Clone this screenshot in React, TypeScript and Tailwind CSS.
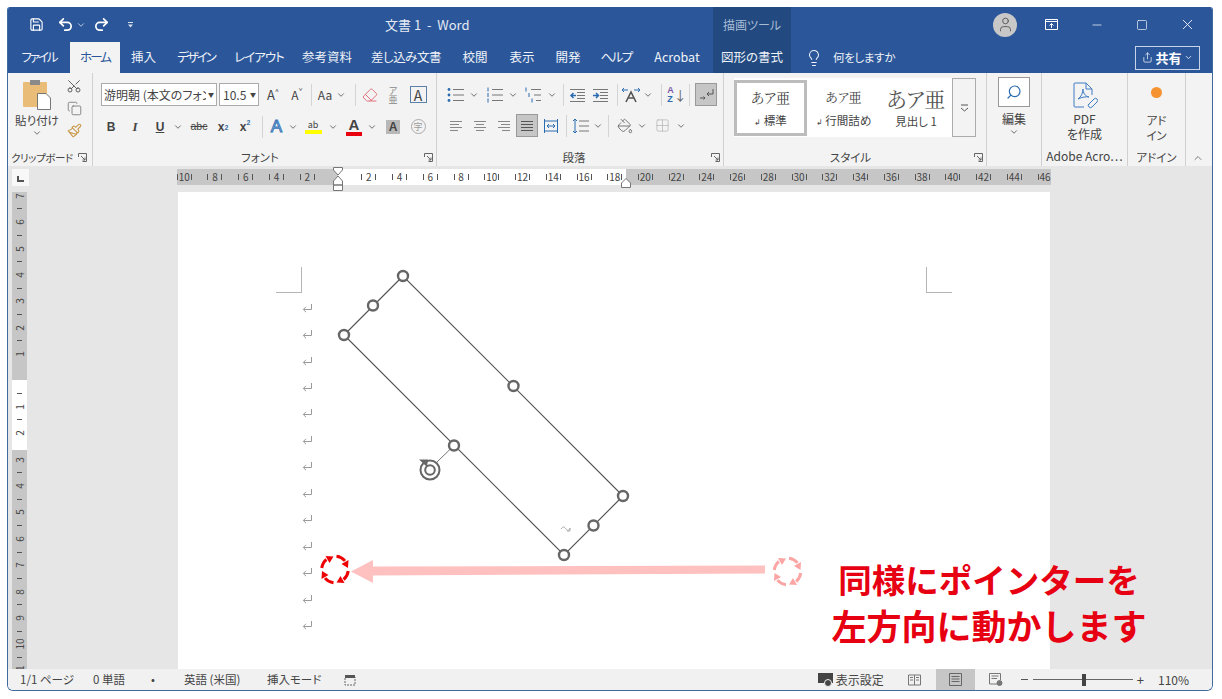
import { ReactNode } from 'react';
import {
  Save, Undo2, Redo2, ChevronDown, ChevronUp, Scissors, Copy, Paintbrush, Lightbulb, Search, Minus, Square, X, Eraser, PaintBucket, Grid2x2, User, Share,
} from 'lucide-react';

const Chev = ({ className = 'text-[#555]' }: { className?: string }) => <ChevronDown size={10} strokeWidth={2} className={`shrink-0 ${className}`} />;

// 幅を固定したセル
const Slot = ({ w, children, className = '' }: { w: string; children?: ReactNode; className?: string }) => (
  <div className={`flex h-full shrink-0 items-center justify-center ${w} ${className}`}>{children}</div>
);

const Sep = () => <div className="h-[22px] w-px shrink-0 bg-[#d4d4d4]" />;

const Launcher = () => (
  <svg className="shrink-0" width="9" height="9" viewBox="0 0 9 9" fill="none" stroke="#666" strokeWidth="1">
    <path d="M.5 4V.5H8.5V8.5H4.5M3 3l4 4M7 4.5V7H4.5" />
  </svg>
);

// 段落アイコン用の横線
const Lines = ({ rows, color = '#777' }: { rows: [number, number][]; color?: string }) => (
  <svg width="16" height="16" viewBox="0 0 16 16" stroke={color} strokeWidth="1" fill="none">
    {rows.map(([a, b], i) => (
      <path key={i} d={`M${a} ${3.5 + i * 3}H${b}`} />
    ))}
  </svg>
);

const Bullets = ({ kind }: { kind: 'dot' | 'num' | 'multi' }) => (
  <svg width="18" height="16" viewBox="0 0 18 16" fill="none">
    <path d={kind === 'multi' ? 'M7 2.5H17M10 8H17M12 13.5H17' : 'M6 2.5H17M6 8H17M6 13.5H17'} stroke="#777" />
    {kind === 'dot' && [2.5, 8, 13.5].map((y) => <circle key={y} cx="2" cy={y} r="1.4" fill="#2b6cb0" />)}
    {kind === 'num' && [2.5, 8, 13.5].map((y) => <path key={y} d={`M2 ${y - 2}V${y + 2}`} stroke="#2b6cb0" />)}
    {kind === 'multi' && <path d="M2 .5V4.5M5 6V10M8 11.5V15.5" stroke="#2b6cb0" />}
  </svg>
);

const Indent = ({ flip }: { flip?: boolean }) => (
  <svg className="shrink-0" width="17" height="16" viewBox="0 0 17 16" fill="none" stroke="#777">
    <path d="M1 2.5H16M8 5.5H16M8 8.5H16M8 11.5H16M1 14.5H16" />
    <path d={flip ? 'M1 8.5H6M4 6l2.5 2.5L4 11' : 'M2 8.5H7M4.5 6L2 8.5 4.5 11'} stroke="#2b6cb0" strokeWidth="1.5" />
  </svg>
);

const ReturnMark = () => (
  <svg width="11" height="11" viewBox="0 0 11 11" fill="none" stroke="#9a9a9a" strokeWidth="1">
    <path d="M9.5 1V6.5H1.5M4 3.8L1.3 6.5 4 9.2" />
  </svg>
);

// 回転カーソル
const RotateCursor = ({ x, y, color }: { x: number; y: number; color: string }) => (
  <g transform={`translate(${x} ${y})`} fill={color} stroke="none">
    {[0, 90, 180, 270].map((deg) => (
      <g key={deg} transform={`rotate(${deg})`}>
        <path d="M1.5 -13.2A13.3 13.3 0 0 1 10 -8.6" fill="none" stroke={color} strokeWidth="3" />
        <path d="M13.5 -9.5L13 -1.5 6.5 -5.5Z" />
      </g>
    ))}
  </g>
);

const Handle = ({ x, y }: { x: number; y: number }) => <circle cx={x} cy={y} r="5" fill="#fff" stroke="#666" strokeWidth="2.4" />;

const tabs = [
  ['ファイル', 'w-[62px] tracking-[-2px]'],
  ['ホーム', 'w-[50px] bg-[#f3f3f3] text-[#2b579a] tracking-[-2px]'],
  ['挿入', 'w-[47px]'],
  ['デザイン', 'w-[58px] tracking-[-2px]'],
  ['レイアウト', 'w-[68px] tracking-[-1px]'],
  ['参考資料', 'w-[68px]'],
  ['差し込み文書', 'w-[90px] tracking-[-0.5px]'],
  ['校閲', 'w-[48px]'],
  ['表示', 'w-[46px]'],
  ['開発', 'w-[46px]'],
  ['ヘルプ', 'w-[50px] tracking-[-1.5px]'],
  ['Acrobat', 'w-[72px]'],
  ['図形の書式', 'w-[78px] bg-[#224a80]'],
];

const RulerCell = ({ n }: { n: number }) => (
  <div className="flex w-[30.75px] shrink-0 items-center justify-center">
    <span className="h-[6px] w-px bg-[#555]" />
    <span className="w-[13px] text-center text-[10px] leading-none">{n}</span>
    <span className="h-[6px] w-px bg-[#555]" />
  </div>
);

const VRulerCell = ({ n }: { n: number }) => (
  <div className="flex h-[26.4px] w-full shrink-0 flex-col items-center justify-between">
    <span className="h-px w-[5px] bg-[#555]" />
    <span className="-rotate-90 text-[10px] leading-none">{n}</span>
    <span className="h-0 w-[5px]" />
  </div>
);

export default function App() {
  const marks = Array.from({ length: 13 }, (_, i) => i);

  return (
    <div className="h-[699px] w-[1222px] overflow-hidden bg-white pl-[7px] pt-[7px] font-['Noto_Sans_CJK_JP','Noto_Sans',sans-serif] text-[12px] text-[#444] [font-feature-settings:'palt']">
      <div className="flex h-[684px] w-[1206px] flex-col overflow-hidden rounded-b-[6px] rounded-t-[3px] border-b border-l border-r border-[#3f6a9e]">
        {/* タイトルバー */}
        <div className="flex h-[35px] shrink-0 items-center bg-[#2b579a] text-white">
          <div className="flex h-full w-[377px] items-center pl-[19px]">
            <Slot w="w-[18px]"><Save size={15} strokeWidth={1.8} /></Slot>
            <Slot w="w-[24px]" className="ml-[8px]"><Undo2 size={17} strokeWidth={2.4} /></Slot>
            <Slot w="w-[8px]"><Chev className="text-[#d5deeb]" /></Slot>
            <Slot w="w-[24px]" className="ml-[4px]"><Redo2 size={17} strokeWidth={2.4} /></Slot>
            <Slot w="w-[10px]" className="ml-[12px]">
              <svg width="7" height="7" viewBox="0 0 7 7" fill="#d5deeb"><path d="M1 1H6V2H1ZM1 3.5H6L3.5 6.5Z" /></svg>
            </Slot>
          </div>
          <div className="w-[328px] text-[13px] text-[#e4eaf4]">文書 1&nbsp;&nbsp;-&nbsp;&nbsp;Word</div>
          <div className="flex h-full w-[78px] items-center justify-center bg-[#224a80] text-[12px] text-[#a9bcd6]">描画ツール</div>
          <div className="flex-1" />
          <div className="mr-[13px] flex h-[24px] w-[24px] items-center justify-center rounded-full bg-[#c8c8c8]">
            <User size={17} strokeWidth={1.3} className="text-[#555]" />
          </div>
          <Slot w="w-[42px]">
            <svg width="13" height="11" viewBox="0 0 13 11" fill="none" stroke="#fff"><path d="M.5.5H12.5V10.5H.5ZM.5 2.5H12.5M6.5 9V4.5M4.5 6.5l2-2 2 2" /></svg>
          </Slot>
          <Slot w="w-[50px]"><Minus size={14} strokeWidth={1.2} /></Slot>
          <Slot w="w-[40px]"><Square size={12} strokeWidth={1.3} className="rounded-[2px]" /></Slot>
          <Slot w="w-[50px]"><X size={17} strokeWidth={1.2} /></Slot>
        </div>

        {/* タブ */}
        <div className="flex h-[31px] shrink-0 items-center bg-[#2b579a] text-[12.5px] text-[#eef2f8]">
          {tabs.map(([label, cls]) => (
            <div key={label} className={`flex h-full shrink-0 items-center justify-center ${cls}`}>{label}</div>
          ))}
          <Slot w="w-[46px]"><Lightbulb size={18} strokeWidth={1.4} /></Slot>
          <div className="-ml-[4px] text-[11.5px] tracking-[-0.3px]">何をしますか</div>
          <div className="flex-1" />
          <div className="mr-[12px] flex h-[24px] w-[65px] items-center justify-center gap-[2px] border border-[#c7d3e6] text-[13px] font-bold text-white">
            <Share size={11} strokeWidth={1.5} />
            共有
            <ChevronDown size={9} strokeWidth={2} />
          </div>
        </div>

        {/* リボン */}
        <div className="flex h-[93px] shrink-0 bg-[#f3f3f3]">
          {/* クリップボード */}
          <div className="flex w-[85px] shrink-0 flex-col border-r border-[#d0d0d0]">
            <div className="flex h-[76px]">
              <div className="flex w-[58px] flex-col items-center pt-[6px]">
                <svg width="30" height="31" viewBox="0 0 30 31">
                  <rect x="1" y="3" width="24" height="25" rx="1" fill="#e9bd77" />
                  <rect x="8" y="1" width="10" height="5" fill="#8a8a8a" />
                  <path d="M15.5 14.5H24L28.5 19V30.5H15.5Z" fill="#fff" stroke="#777" />
                </svg>
                <div className="mt-[2px] whitespace-nowrap text-[11.5px] leading-[16px] text-[#444]">貼り付け</div>
                <Chev />
              </div>
              <div className="flex flex-col items-center gap-[7px] pt-[5px]">
                <Scissors size={16} strokeWidth={1.4} className="-rotate-90 text-[#555]" />
                <Copy size={15} strokeWidth={1.2} className="text-[#666]" />
                <Paintbrush size={15} strokeWidth={1.8} className="text-[#c99a4b]" />
              </div>
            </div>
            <div className="flex h-[17px] items-center justify-between pl-[3px] pr-[5px] text-[10.5px]">
              <span className="whitespace-nowrap tracking-[-0.4px]">クリップボード</span>
              <Launcher />
            </div>
          </div>

          {/* フォント */}
          <div className="flex w-[344px] shrink-0 flex-col border-r border-[#d0d0d0] pt-[10px]">
            <div className="flex h-[23px] items-center pl-[8px]">
              <div className="flex h-[23px] w-[116px] items-center border border-[#ababab] bg-white pl-[2px] pr-[2px] text-[12px]">
                <span className="min-w-0 flex-1 overflow-hidden whitespace-nowrap">游明朝 (本文のフォン</span>
                <span className="ml-[2px] text-[6px]">▼</span>
              </div>
              <div className="ml-[2px] flex h-[23px] w-[40px] items-center border border-[#ababab] bg-white pl-[3px] pr-[2px] text-[12px]">
                <span className="min-w-0 flex-1 overflow-hidden">10.5</span>
                <span className="text-[6px]">▼</span>
              </div>
              <Slot w="w-[28px]" className="text-[13px]">A<sup className="text-[7px]">^</sup></Slot>
              <Slot w="w-[20px]" className="text-[12px]">A<sup className="text-[7px]">ˇ</sup></Slot>
              <Slot w="w-[8px]"><Sep /></Slot>
              <Slot w="w-[20px]" className="text-[12px]">Aa</Slot>
              <Slot w="w-[12px]"><Chev /></Slot>
              <Slot w="w-[16px]"><Sep /></Slot>
              <Slot w="w-[14px]"><Eraser size={16} strokeWidth={1.5} className="shrink-0 text-[#e0707a]" /></Slot>
              <Slot w="w-[32px]" className="text-[9px] leading-[9px] text-[#888]"><span className="text-center">ア<br />亜</span></Slot>
              <Slot w="w-[18px]">
                <div className="flex h-[17px] w-[17px] shrink-0 items-center justify-center border border-[#5a7fa8] text-[14px] leading-none">A</div>
              </Slot>
            </div>
            <div className="mt-[9px] flex h-[23px] items-center pl-[6px] text-[#444]">
              <Slot w="w-[24px]" className="font-['Liberation_Sans',sans-serif] text-[12px] font-bold">B</Slot>
              <Slot w="w-[24px]" className="font-['Liberation_Serif',serif] text-[13px] font-bold italic">I</Slot>
              <Slot w="w-[26px]" className="font-['Liberation_Sans',sans-serif] text-[12px] font-bold underline">U</Slot>
              <Slot w="w-[10px]"><Chev /></Slot>
              <Slot w="w-[32px]" className="font-['Liberation_Sans',sans-serif] text-[10.5px] line-through">abc</Slot>
              <Slot w="w-[16px]" className="font-['Liberation_Sans',sans-serif] text-[12px] font-bold">x<sub className="text-[7px] text-[#3a6ea5]">2</sub></Slot>
              <Slot w="w-[28px]" className="font-['Liberation_Sans',sans-serif] text-[12px] font-bold">x<sup className="text-[7px] text-[#3a6ea5]">2</sup></Slot>
              <Slot w="w-[6px]"><Sep /></Slot>
              <Slot w="w-[23px]" className="font-['Liberation_Sans',sans-serif] text-[17px] text-[#bcd3ee] [-webkit-text-stroke:1px_#3a78b8]">A</Slot>
              <Slot w="w-[10px]"><Chev /></Slot>
              <Slot w="w-[30px]">
                <div className="flex flex-col items-center leading-none">
                  <span className="text-[9px] leading-[11px]">ab</span>
                  <span className="h-[4px] w-[17px] bg-[#ffff00]" />
                </div>
              </Slot>
              <Slot w="w-[10px]"><Chev /></Slot>
              <Slot w="w-[32px]">
                <div className="flex flex-col items-center">
                  <span className="font-['Liberation_Sans',sans-serif] text-[15px] font-bold leading-[14px]">A</span>
                  <span className="h-[4px] w-[16px] bg-[#e8000f]" />
                </div>
              </Slot>
              <Slot w="w-[4px]"><Chev /></Slot>
              <Slot w="w-[38px]">
                <div className="flex h-[14px] w-[14px] items-center justify-center bg-[#b8b8b8] font-['Liberation_Sans',sans-serif] text-[12px] font-bold">A</div>
              </Slot>
              <Slot w="w-[12px]">
                <div className="flex h-[15px] w-[15px] shrink-0 items-center justify-center rounded-full border border-[#aaa] text-[9px] text-[#999]">字</div>
              </Slot>
            </div>
            <div className="mt-auto flex h-[17px] items-center pr-[3px]">
              <span className="flex-1 pl-[3px] text-center text-[11.5px]">フォント</span>
              <Launcher />
            </div>
          </div>

          {/* 段落 */}
          <div className="flex w-[287px] shrink-0 flex-col border-r border-[#d0d0d0] pt-[10px]">
            <div className="flex h-[23px] items-center pl-[9px]">
              <Slot w="w-[20px]"><Bullets kind="dot" /></Slot>
              <Slot w="w-[16px]"><Chev /></Slot>
              <Slot w="w-[26px]"><Bullets kind="num" /></Slot>
              <Slot w="w-[10px]"><Chev /></Slot>
              <Slot w="w-[30px]"><Bullets kind="multi" /></Slot>
              <Slot w="w-[8px]"><Chev /></Slot>
              <Slot w="w-[14px]"><Sep /></Slot>
              <Slot w="w-[14px]"><Indent /></Slot>
              <Slot w="w-[32px]"><Indent flip /></Slot>
              <Slot w="w-[2px]"><Sep /></Slot>
              <Slot w="w-[26px]">
                <svg width="20" height="16" viewBox="0 0 20 16" fill="none">
                  <path d="M1 3h6M1 3l2-2M1 3l2 2M19 3h-6M19 3l-2-2M19 3l-2 2" stroke="#2b6cb0" />
                  <path d="M5 15L10 5l5 10M7 11h6" stroke="#555" strokeWidth="1.6" />
                </svg>
              </Slot>
              <Slot w="w-[8px]"><Chev /></Slot>
              <Slot w="w-[18px]"><Sep /></Slot>
              <Slot w="w-[14px]">
                <div className="flex shrink-0 items-center">
                  <span className="flex flex-col font-['Liberation_Sans',sans-serif] text-[9px] font-bold leading-[9px]">
                    <span className="text-[#7a5aa8]">A</span>
                    <span className="text-[#2b6cb0]">Z</span>
                  </span>
                  <span className="text-[13px] leading-none text-[#666]">↓</span>
                </div>
              </Slot>
              <Slot w="w-[11px]"><Sep /></Slot>
              <Slot w="w-[22px]" className="border border-[#999] bg-[#c6c6c6]">
                <svg width="15" height="13" viewBox="0 0 15 13" fill="none" stroke="#555">
                  <path d="M14 1V6H8M10 4L8 6l2 2M1 10H6M4.5 8.5L6 10l-1.5 1.5" />
                </svg>
              </Slot>
            </div>
            <div className="mt-[8px] flex h-[23px] items-center pl-[7px]">
              <Slot w="w-[24px]"><Lines rows={[[2, 14], [2, 11], [2, 14], [2, 10]]} color="#888" /></Slot>
              <Slot w="w-[24px]"><Lines rows={[[2, 14], [4, 12], [2, 14], [4, 12]]} color="#888" /></Slot>
              <Slot w="w-[24px]"><Lines rows={[[2, 14], [5, 14], [2, 14], [6, 14]]} color="#888" /></Slot>
              <Slot w="w-[22px]" className="border border-[#999] bg-[#c6c6c6]"><Lines rows={[[2, 14], [2, 14], [2, 14], [2, 14]]} color="#555" /></Slot>
              <Slot w="w-[26px]">
                <svg width="16" height="16" viewBox="0 0 16 16" fill="none" stroke="#2b6cb0">
                  <path d="M1.5 1V15M14.5 1V15M1.5 3H14.5M1.5 13H14.5M4 8H12M4 8l2-2M4 8l2 2M12 8l-2-2M12 8l-2 2" />
                </svg>
              </Slot>
              <Slot w="w-[5px]"><Sep /></Slot>
              <Slot w="w-[24px]">
                <svg width="18" height="16" viewBox="0 0 18 16" fill="none">
                  <path d="M7 3H17M7 8H17M7 13H17" stroke="#777" />
                  <path d="M3 1V15M1 3l2-2 2 2M1 13l2 2 2-2" stroke="#2b6cb0" />
                </svg>
              </Slot>
              <Slot w="w-[9px]"><Chev /></Slot>
              <Slot w="w-[12px]"><Sep /></Slot>
              <Slot w="w-[22px]"><PaintBucket size={16} strokeWidth={1.3} className="text-[#666]" /></Slot>
              <Slot w="w-[12px]"><Chev /></Slot>
              <Slot w="w-[28px]"><Grid2x2 size={15} strokeWidth={1} className="text-[#aaa]" /></Slot>
              <Slot w="w-[10px]"><Chev /></Slot>
            </div>
            <div className="mt-auto flex h-[17px] items-center pr-[3px]">
              <span className="flex-1 text-center text-[11.5px]">段落</span>
              <Launcher />
            </div>
          </div>

          {/* スタイル */}
          <div className="flex w-[263px] shrink-0 flex-col border-r border-[#d0d0d0]">
            <div className="flex h-[76px] pl-[10px] pt-[5px]">
              <div className="flex h-[59px] w-[218px] items-center bg-white font-['Noto_Serif_CJK_JP','Liberation_Serif','Noto_Sans_CJK_JP',serif]">
                <div className="flex h-[56px] w-[73px] shrink-0 flex-col items-center justify-center border-[3px] border-[#bcbcbc]">
                  <div className="text-[14px] leading-[26px]">あア亜</div>
                  <div className="font-['Noto_Sans_CJK_JP',sans-serif] text-[11.5px] leading-[20px]"><span className="text-[8px]">↲</span> 標準</div>
                </div>
                <div className="flex w-[73px] shrink-0 flex-col items-center">
                  <div className="text-[13px] leading-[26px]">あア亜</div>
                  <div className="font-['Noto_Sans_CJK_JP',sans-serif] text-[11.5px] leading-[20px]"><span className="text-[8px]">↲</span> 行間詰め</div>
                </div>
                <div className="flex flex-1 flex-col items-center">
                  <div className="text-[21px] leading-[26px] text-[#555]">あア亜</div>
                  <div className="font-['Noto_Sans_CJK_JP',sans-serif] text-[11.5px] leading-[20px]">見出し 1</div>
                </div>
              </div>
              <div className="flex h-[59px] w-[24px] items-center justify-center border border-[#ababab] bg-[#f3f3f3]">
                <svg width="9" height="8" viewBox="0 0 9 8" fill="none" stroke="#555"><path d="M1 1H8M1 4l3.5 3L8 4" /></svg>
              </div>
            </div>
            <div className="flex h-[17px] items-center pr-[3px]">
              <span className="flex-1 pl-[3px] text-center text-[11.5px]">スタイル</span>
              <Launcher />
            </div>
          </div>

          {/* 編集 */}
          <div className="flex w-[55px] shrink-0 flex-col items-center border-r border-[#d0d0d0] pt-[4px]">
            <div className="flex h-[30px] w-[32px] items-center justify-center border border-[#999] bg-white">
              <Search size={16} strokeWidth={1.8} className="-scale-x-100 text-[#2b6cb0]" />
            </div>
            <div className="mt-[4px] text-[12px] leading-[16px]">編集</div>
            <Chev />
          </div>

          {/* Adobe */}
          <div className="flex w-[86px] shrink-0 flex-col items-center border-r border-[#d0d0d0]">
            <svg className="mt-[9px]" width="26" height="27" viewBox="0 0 26 27" fill="none" stroke="#3f7cc4" strokeWidth="1">
              <path d="M12 25H3a1 1 0 0 1-1-1V2a1 1 0 0 1 1-1H14L20 7V13M14 1V7H20" />
              <path d="M6 17c3-2 5-6 5-10 0 4 2 7 6 8-3-.5-7 0-11 2Z" />
              <path d="M16 23l6-6a2 2 0 0 1 3 3l-5 5a2 2 0 0 1-3-3l4-4" />
            </svg>
            <div className="mt-[2px] text-[12px] leading-[15px]">PDF</div>
            <div className="text-[12px] leading-[15px]">を作成</div>
            <div className="mt-auto h-[18px] whitespace-nowrap text-[12px] leading-[15px]">Adobe Acro…</div>
          </div>

          {/* アドイン */}
          <div className="flex w-[58px] shrink-0 flex-col items-center border-r border-[#d0d0d0]">
            <div className="mt-[14px] h-[11px] w-[11px] rounded-full bg-[#f59331]" />
            <div className="mt-[15px] text-[11.5px] leading-[15px]">アド</div>
            <div className="text-[11.5px] leading-[15px]">イン</div>
            <div className="mt-auto h-[17px] text-[11.5px] leading-[17px]">アドイン</div>
          </div>
          <div className="flex flex-1 items-end justify-center pb-[2px] pr-[2px]">
            <ChevronUp size={12} strokeWidth={1.5} className="text-[#555]" />
          </div>
        </div>

        {/* 水平ルーラー */}
        <div className="flex h-[26px] shrink-0 items-start bg-[#e6e6e6] pt-[3px]">
          <div className="ml-[4px] flex h-[17px] w-[17px] items-center justify-center bg-[#f8f8f8]">
            <span className="mt-[2px] h-[6px] w-[7px] border-b-2 border-l-2 border-[#555]" />
          </div>
          <div className="relative ml-[148px] flex h-[16px] w-[874px] text-[#444]">
            <div className="flex w-[161px] justify-end overflow-hidden bg-[#c6c6c6]">
              {[10, 8, 6, 4, 2].map((n) => <RulerCell key={n} n={n} />)}
              <div className="w-[15.4px] shrink-0" />
            </div>
            <div className="flex w-[288px] overflow-hidden bg-white">
              <div className="w-[15.4px] shrink-0" />
              {[2, 4, 6, 8, 10, 12, 14, 16, 18].map((n) => <RulerCell key={n} n={n} />)}
            </div>
            <div className="flex flex-1 overflow-hidden bg-[#c6c6c6] pl-[4px]">
              {[20, 22, 24, 26, 28, 30, 32, 34, 36, 38, 40, 42, 44, 46].map((n) => <RulerCell key={n} n={n} />)}
            </div>
            {/* インデントマーカー */}
            <svg className="absolute left-[155px] top-[-2px]" width="12" height="25" viewBox="0 0 12 25" fill="#fff" stroke="#777">
              <path d="M1.5 .5H10.5V3L6 8 1.5 3Z" />
              <path d="M6 9L10.5 14V18H1.5V14ZM1.5 18H10.5V23.5H1.5Z" />
            </svg>
            <svg className="absolute left-[443px] top-[9px]" width="12" height="10" viewBox="0 0 12 10" fill="#fff" stroke="#777">
              <path d="M6 .5L10.5 5V9.5H1.5V5Z" />
            </svg>
          </div>
        </div>

        {/* 文書領域 */}
        <div className="flex min-h-0 flex-1 bg-[#e6e6e6]">
          <div className="ml-[4px] flex h-full w-[15px] shrink-0 flex-col overflow-hidden text-[#444]">
            <div className="flex h-[188px] shrink-0 flex-col justify-end overflow-hidden bg-[#c6c6c6]">
              {[7, 6, 5, 4, 3, 2, 1].map((n) => <VRulerCell key={n} n={n} />)}
              <div className="h-[13.2px] shrink-0" />
            </div>
            <div className="flex h-[70px] shrink-0 flex-col bg-white pt-[13px]">
              {[1, 2].map((n) => <VRulerCell key={n} n={n} />)}
            </div>
            <div className="flex-1 overflow-hidden bg-[#c6c6c6]">
              <div className="-mt-[4px]">
                {[3, 4, 5, 6, 7, 8, 9, 10, 11].map((n) => <VRulerCell key={n} n={n} />)}
              </div>
            </div>
          </div>

          <div className="relative ml-[151px] h-full w-[872px] bg-white">
            {/* トンボ */}
            <div className="absolute left-[98px] top-[75px] h-[26px] w-[26px] border-b border-r border-[#b5b5b5]" />
            <div className="absolute left-[748px] top-[75px] h-[26px] w-[26px] border-b border-l border-[#b5b5b5]" />

            {/* 段落記号 */}
            <div className="flex flex-col pl-[124px] pt-[103px]">
              {marks.map((i) => (
                <div key={i} className="flex h-[26.45px] items-center"><ReturnMark /></div>
              ))}
            </div>

            {/* 図形と矢印 */}
            <svg className="absolute left-0 top-0" width="872" height="476" viewBox="178 192 872 476" fill="none">
              <path d="M403 276L344 335 564 555 623 496Z" stroke="#555" strokeWidth="1.2" />
              <path d="M454 445.5L437 462" stroke="#777" />
              {[[403, 276], [373, 305.5], [344, 335], [513.5, 386], [454, 445.5], [623, 496], [593.5, 525.5], [564, 555]].map(([x, y]) => (
                <Handle key={`${x}-${y}`} x={x} y={y} />
              ))}
              <circle cx="430" cy="470" r="9.5" fill="#fff" stroke="#666" strokeWidth="2" />
              <circle cx="430" cy="470" r="4.8" stroke="#666" strokeWidth="2" />
              <path d="M419 459.5H428L427 467Z" fill="#666" />
              <path d="M561 529c2-3 4-2 5 0s3 2 4-1M570 528v3h-3" stroke="#aaa" strokeWidth="1" />
              <path d="M373 566.5L765 565.5V573.5L373 575.5V583L351 571.5 373 560Z" fill="#ffc0c0" />
              <RotateCursor x={335} y={569.5} color="#ee0000" />
              <RotateCursor x={787.5} y={571.5} color="#fba5a5" />
            </svg>

            {/* 注釈 */}
            <div className="absolute left-[611px] top-[364px] w-[400px] text-center text-[33.5px] font-bold leading-[46px] text-[#e60012] [font-feature-settings:normal]">
              <div className="whitespace-nowrap">同様にポインターを</div>
              <div className="whitespace-nowrap text-[35px]">左方向に動かします</div>
            </div>
          </div>
        </div>

        {/* ステータスバー */}
        <div className="flex h-[21px] shrink-0 items-center whitespace-nowrap bg-[#f1f1f1] text-[11.5px] text-[#444]">
          <div className="w-[79px] pl-[12px]">1/1 ページ</div>
          <div className="w-[61px] pl-[6px]">0 単語</div>
          <div className="w-[36px] pl-[3px]">•</div>
          <div className="w-[83px]">英語 (米国)</div>
          <div className="w-[77px]">挿入モード</div>
          <svg width="12" height="12" viewBox="0 0 12 12"><rect x="1" y="3" width="10" height="8" fill="none" stroke="#666" strokeDasharray="2 1" /><rect x="1" y="1" width="10" height="3" fill="#555" /></svg>
          <div className="flex-1" />
          <svg className="mr-[2px]" width="16" height="14" viewBox="0 0 16 14"><rect x="0" y="0" width="15" height="10" fill="#444" /><circle cx="10" cy="10" r="3.5" fill="#444" stroke="#f1f1f1" /></svg>
          <div className="w-[67px] text-[12px]">表示設定</div>
          <Slot w="w-[24px]">
            <svg width="13" height="12" viewBox="0 0 13 12" fill="none" stroke="#777"><path d="M.5 1H12.5V11H.5ZM6.5 1V11M2 3.5H5M2 6H5M8 3.5H11M8 6H11" /></svg>
          </Slot>
          <div className="ml-[9px] flex h-full w-[39px] items-center justify-center bg-[#c6c6c6]">
            <svg width="13" height="13" viewBox="0 0 13 13" fill="none" stroke="#666"><path d="M.5.5H12.5V12.5H.5ZM2.5 3.5H10.5M2.5 6H10.5M2.5 8.5H10.5" /></svg>
          </div>
          <Slot w="w-[42px]">
            <svg width="14" height="13" viewBox="0 0 14 13" fill="none" stroke="#777"><path d="M9 11H.5V.5H11.5V7M2.5 3H9.5M2.5 5.5H8" /><circle cx="10.5" cy="10" r="2.5" fill="#777" /></svg>
          </Slot>
          <div className="ml-[4px] h-px w-[7px] bg-[#555]" />
          <div className="relative ml-[5px] flex h-[12px] w-[100px] items-center">
            <div className="h-px w-full bg-[#666]" />
            <div className="absolute left-[49px] top-0 h-[12px] w-[4px] bg-[#444]" />
          </div>
          <div className="ml-[4px] text-[13px] leading-none">+</div>
          <div className="ml-[14px] w-[54px] text-[12px]">110%</div>
        </div>
      </div>
    </div>
  );
}
